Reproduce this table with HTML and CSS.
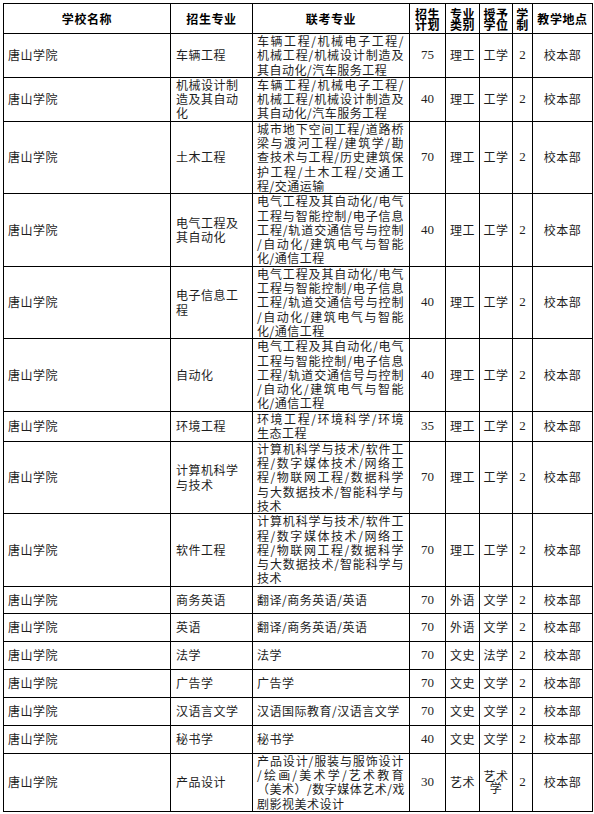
FILE: index.html
```html
<!DOCTYPE html>
<html lang="zh-CN">
<head>
<meta charset="utf-8">
<title>唐山学院 招生专业</title>
<link rel="stylesheet" href="styles.css">
</head>
<body>
<table class="plan">
<colgroup>
<col class="c-school"><col class="c-major"><col class="c-joint"><col class="c-num"><col class="c-type"><col class="c-degree"><col class="c-years"><col class="c-place">
</colgroup>
<thead>
<tr class="hd">
<th>学校名称</th><th>招生专业</th><th>联考专业</th><th>招生计划</th><th>专业类别</th><th>授予学位</th><th>学制</th><th>教学地点</th>
</tr>
</thead>
<tbody>
<tr class="n3">
<td class="school">唐山学院</td><td class="major">车辆工程</td>
<td class="joint"><span class="ln">车辆工程/机械电子工程/</span><span class="ln">机械工程/机械设计制造及</span><span class="last">其自动化/汽车服务工程</span></td>
<td class="num">75</td><td class="mid">理工</td><td class="mid">工学</td><td class="num">2</td><td class="mid">校本部</td>
</tr>
<tr class="n3b">
<td class="school">唐山学院</td><td class="major">机械设计制造及其自动化</td>
<td class="joint"><span class="ln">车辆工程/机械电子工程/</span><span class="ln">机械工程/机械设计制造及</span><span class="last">其自动化/汽车服务工程</span></td>
<td class="num">40</td><td class="mid">理工</td><td class="mid">工学</td><td class="num">2</td><td class="mid">校本部</td>
</tr>
<tr class="n5">
<td class="school">唐山学院</td><td class="major">土木工程</td>
<td class="joint"><span class="ln">城市地下空间工程/道路桥</span><span class="ln">梁与渡河工程/建筑学/勘</span><span class="ln">查技术与工程/历史建筑保</span><span class="ln">护工程/土木工程/交通工</span><span class="last">程/交通运输</span></td>
<td class="num">70</td><td class="mid">理工</td><td class="mid">工学</td><td class="num">2</td><td class="mid">校本部</td>
</tr>
<tr class="n5">
<td class="school">唐山学院</td><td class="major">电气工程及其自动化</td>
<td class="joint"><span class="ln">电气工程及其自动化/电气</span><span class="ln">工程与智能控制/电子信息</span><span class="ln">工程/轨道交通信号与控制</span><span class="ln">/自动化/建筑电气与智能</span><span class="last">化/通信工程</span></td>
<td class="num">40</td><td class="mid">理工</td><td class="mid">工学</td><td class="num">2</td><td class="mid">校本部</td>
</tr>
<tr class="n5">
<td class="school">唐山学院</td><td class="major">电子信息工程</td>
<td class="joint"><span class="ln">电气工程及其自动化/电气</span><span class="ln">工程与智能控制/电子信息</span><span class="ln">工程/轨道交通信号与控制</span><span class="ln">/自动化/建筑电气与智能</span><span class="last">化/通信工程</span></td>
<td class="num">40</td><td class="mid">理工</td><td class="mid">工学</td><td class="num">2</td><td class="mid">校本部</td>
</tr>
<tr class="n5">
<td class="school">唐山学院</td><td class="major">自动化</td>
<td class="joint"><span class="ln">电气工程及其自动化/电气</span><span class="ln">工程与智能控制/电子信息</span><span class="ln">工程/轨道交通信号与控制</span><span class="ln">/自动化/建筑电气与智能</span><span class="last">化/通信工程</span></td>
<td class="num">40</td><td class="mid">理工</td><td class="mid">工学</td><td class="num">2</td><td class="mid">校本部</td>
</tr>
<tr class="n2">
<td class="school">唐山学院</td><td class="major">环境工程</td>
<td class="joint"><span class="ln">环境工程/环境科学/环境</span><span class="last">生态工程</span></td>
<td class="num">35</td><td class="mid">理工</td><td class="mid">工学</td><td class="num">2</td><td class="mid">校本部</td>
</tr>
<tr class="n5">
<td class="school">唐山学院</td><td class="major">计算机科学与技术</td>
<td class="joint"><span class="ln">计算机科学与技术/软件工</span><span class="ln">程/数字媒体技术/网络工</span><span class="ln">程/物联网工程/数据科学</span><span class="ln">与大数据技术/智能科学与</span><span class="last">技术</span></td>
<td class="num">70</td><td class="mid">理工</td><td class="mid">工学</td><td class="num">2</td><td class="mid">校本部</td>
</tr>
<tr class="n5">
<td class="school">唐山学院</td><td class="major">软件工程</td>
<td class="joint"><span class="ln">计算机科学与技术/软件工</span><span class="ln">程/数字媒体技术/网络工</span><span class="ln">程/物联网工程/数据科学</span><span class="ln">与大数据技术/智能科学与</span><span class="last">技术</span></td>
<td class="num">70</td><td class="mid">理工</td><td class="mid">工学</td><td class="num">2</td><td class="mid">校本部</td>
</tr>
<tr class="n1a">
<td class="school">唐山学院</td><td class="major">商务英语</td>
<td class="joint">翻译/商务英语/英语</td>
<td class="num">70</td><td class="mid">外语</td><td class="mid">文学</td><td class="num">2</td><td class="mid">校本部</td>
</tr>
<tr class="n1">
<td class="school">唐山学院</td><td class="major">英语</td>
<td class="joint">翻译/商务英语/英语</td>
<td class="num">70</td><td class="mid">外语</td><td class="mid">文学</td><td class="num">2</td><td class="mid">校本部</td>
</tr>
<tr class="n1">
<td class="school">唐山学院</td><td class="major">法学</td>
<td class="joint">法学</td>
<td class="num">70</td><td class="mid">文史</td><td class="mid">法学</td><td class="num">2</td><td class="mid">校本部</td>
</tr>
<tr class="n1">
<td class="school">唐山学院</td><td class="major">广告学</td>
<td class="joint">广告学</td>
<td class="num">70</td><td class="mid">文史</td><td class="mid">文学</td><td class="num">2</td><td class="mid">校本部</td>
</tr>
<tr class="n1">
<td class="school">唐山学院</td><td class="major">汉语言文学</td>
<td class="joint">汉语国际教育/汉语言文学</td>
<td class="num">70</td><td class="mid">文史</td><td class="mid">文学</td><td class="num">2</td><td class="mid">校本部</td>
</tr>
<tr class="n1">
<td class="school">唐山学院</td><td class="major">秘书学</td>
<td class="joint">秘书学</td>
<td class="num">40</td><td class="mid">文史</td><td class="mid">文学</td><td class="num">2</td><td class="mid">校本部</td>
</tr>
<tr class="n4">
<td class="school">唐山学院</td><td class="major">产品设计</td>
<td class="joint"><span class="ln">产品设计/服装与服饰设计</span><span class="ln">/绘画/美术学/艺术教育</span><span class="ln">（美术）/数字媒体艺术/戏</span><span class="last">剧影视美术设计</span></td>
<td class="num">30</td><td class="mid">艺术</td><td class="mid tight">艺术学</td><td class="num">2</td><td class="mid">校本部</td>
</tr>
</tbody>
</table>
</body>
</html>
```

FILE: styles.css
```css
html, body {
  margin: 0;
  padding: 0;
  background: #fff;
}

body {
  padding: 3px 0 0 3px;
  font-family: "Noto Sans CJK SC", sans-serif;
  color: #1e1e1e;
}

.plan {
  border-collapse: collapse;
  table-layout: fixed;
  width: 589px;
  border: 1px solid #000;
}

.c-school { width: 167px; }
.c-major { width: 82px; }
.c-joint { width: 157px; }
.c-num { width: 36px; }
.c-type { width: 34px; }
.c-degree { width: 33px; }
.c-years { width: 20px; }
.c-place { width: 60px; }

.plan th,
.plan td {
  border: 1px solid #000;
  padding: 0;
  vertical-align: middle;
  font-size: 12px;
  line-height: 14.3px;
  letter-spacing: 0.5px;
  overflow: hidden;
}

.plan th {
  font-weight: 700;
  color: #000;
  text-align: center;
  line-height: 11px;
  letter-spacing: 0.6px;
  padding: 0 1px;
}

.hd th { height: 29px; }
.n1 td { height: 27px; }
.n1a td { height: 26px; }
.n2 td { height: 29px; }
.n3 td { height: 42.9px; }
.n3b td { height: 42px; }
.n4 td { height: 57px; }
.n5 td { height: 71.5px; }

.school {
  padding-left: 4px !important;
  text-align: left;
}

.major {
  padding: 0 5px 0 5px !important;
  text-align: left;
}

.joint {
  padding: 0 5px 0 4px !important;
  text-align: left;
}

.joint .ln {
  display: block;
  text-align: justify;
  text-align-last: justify;
  white-space: nowrap;
}

.joint .last {
  display: block;
  text-align: left;
  white-space: nowrap;
}

.num {
  text-align: center;
  font-family: "Liberation Serif", serif;
  font-size: 13px !important;
  letter-spacing: 0 !important;
}

.mid {
  text-align: center;
  padding: 0 2px !important;
}

.tight {
  line-height: 12px !important;
}
```
